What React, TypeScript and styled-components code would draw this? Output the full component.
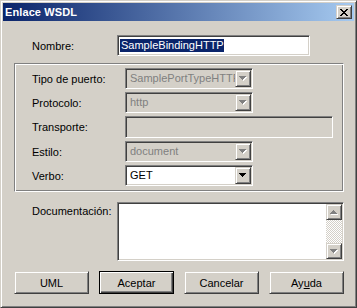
import React from 'react';
import styled, { createGlobalStyle } from 'styled-components';

const GlobalStyle = createGlobalStyle`
  html, body {
    margin: 0;
    padding: 0;
    background: #d4d0c8;
  }
  body {
    font-family: "Liberation Sans", Arial, sans-serif;
    font-size: 11px;
    color: #000;
  }
  * {
    box-sizing: border-box;
  }
`;

// Win2k bevels
const raised = `
  border: 1px solid;
  border-color: #d4d0c8 #404040 #404040 #d4d0c8;
  box-shadow: inset 1px 1px #fff, inset -1px -1px #808080;
`;

const sunken = `
  border: 1px solid;
  border-color: #808080 #fff #fff #808080;
  box-shadow: inset 1px 1px #404040, inset -1px -1px #d4d0c8;
`;

const Window = styled.div`
  width: 357px;
  height: 308px;
  background: #d4d0c8;
  border: 1px solid;
  border-color: #d4d0c8 #404040 #404040 #d4d0c8;
  box-shadow: inset 1px 1px #fff, inset -1px -1px #808080;
  padding: 2px;
  display: flex;
  flex-direction: column;
`;

const TitleBar = styled.div`
  height: 18px;
  display: flex;
  align-items: center;
  justify-content: space-between;
  padding: 0 2px 0 2px;
  background: linear-gradient(to right, #0a246a, #a6caf0);
`;

const Title = styled.span`
  color: #fff;
  font-weight: bold;
  font-size: 11px;
  letter-spacing: 0.1px;
`;

const CloseButton = styled.div`
  width: 16px;
  height: 14px;
  background: #d4d0c8;
  ${raised}
  display: flex;
  align-items: center;
  justify-content: center;
  padding-top: 0px;
`;

const Body = styled.div`
  flex: 1;
  display: flex;
  flex-direction: column;
  padding: 14px 10px 0 11px;
`;

const FieldRow = styled.div<{ $labelWidth: number; $top?: boolean }>`
  display: grid;
  grid-template-columns: ${(p) => p.$labelWidth}px 1fr;
  align-items: ${(p) => (p.$top ? 'start' : 'center')};
`;

const Label = styled.span<{ $indent: number; $top?: boolean }>`
  padding-left: ${(p) => p.$indent}px;
  padding-top: ${(p) => (p.$top ? 3 : 0)}px;
  white-space: nowrap;
`;

const TextBox = styled.div<{ $width: number; $height: number; $disabled?: boolean }>`
  width: ${(p) => p.$width}px;
  height: ${(p) => p.$height}px;
  background: ${(p) => (p.$disabled ? '#d4d0c8' : '#fff')};
  ${sunken}
  padding: 1px 2px;
  display: flex;
  align-items: center;
  overflow: hidden;
`;

const Selected = styled.span`
  background: #0a246a;
  color: #fff;
  line-height: 13px;
  padding: 0 0 0 1px;
  white-space: nowrap;
`;

const GroupBox = styled.div`
  margin-top: 7px;
  width: 330px;
  height: 129px;
  border: 1px solid;
  border-color: #808080 #fff #fff #808080;
  box-shadow: inset 1px 1px #fff, inset -1px -1px #808080;
  padding: 4px 8px 0 0;
  display: grid;
  grid-template-columns: 110px 1fr;
  grid-template-rows: 21px 21px 22px 21px 21px;
  row-gap: 3px;
  align-items: center;
`;

const Combo = styled.div<{ $disabled?: boolean }>`
  width: 128px;
  height: 21px;
  ${sunken}
  padding: 1px;
  display: flex;
  background: ${(p) => (p.$disabled ? '#d4d0c8' : '#fff')};
`;

const ComboText = styled.span<{ $disabled?: boolean }>`
  flex: 1;
  min-width: 0;
  overflow: hidden;
  white-space: nowrap;
  padding-left: 3px;
  line-height: 17px;
  color: ${(p) => (p.$disabled ? '#808080' : '#000')};
`;

const ArrowButton = styled.div`
  width: 16px;
  height: 17px;
  flex: none;
  background: #d4d0c8;
  ${raised}
  display: flex;
  align-items: center;
  justify-content: center;
`;

const DocRow = styled(FieldRow)`
  margin-top: 10px;
`;

const TextArea = styled.div`
  height: 59px;
  width: 227px;
  background: #fff;
  ${sunken}
  padding: 1px;
  display: flex;
  justify-content: flex-end;
`;

const ScrollBar = styled.div`
  width: 16px;
  display: flex;
  flex-direction: column;
`;

const ScrollTrack = styled.div`
  flex: 1;
  background: repeating-conic-gradient(#fff 0 25%, #d4d0c8 0 50%) 0 0 / 2px 2px;
`;

const ScrollButton = styled.div`
  width: 16px;
  height: 16px;
  background: #d4d0c8;
  ${raised}
  display: flex;
  align-items: center;
  justify-content: center;
`;

const ButtonRow = styled.div`
  margin-top: 10px;
  width: 330px;
  display: flex;
  justify-content: space-between;
`;

const Button = styled.div<{ $default?: boolean }>`
  width: 75px;
  height: 23px;
  background: #d4d0c8;
  display: flex;
  align-items: center;
  justify-content: center;
  ${(p) =>
    p.$default
      ? `
    border: 1px solid #000;
    box-shadow: inset 1px 1px #fff, inset -1px -1px #404040, inset -2px -2px #808080;
  `
      : raised}
`;

const Arrow = ({ dir, disabled }: { dir: 'up' | 'down'; disabled?: boolean }) => {
  const d = dir === 'down' ? 'M0 0h7v1H0z M1 1h5v1H1z M2 2h3v1H2z M3 3h1v1H3z' : 'M3 0h1v1H3z M2 1h3v1H2z M1 2h5v1H1z M0 3h7v1H0z';
  return (
    <svg width="8" height="5" viewBox="0 0 8 5" shapeRendering="crispEdges">
      {disabled && <path d={d} fill="#fff" transform="translate(1 1)" />}
      <path d={d} fill={disabled ? '#808080' : '#000'} />
    </svg>
  );
};

const CloseGlyph = () => (
  <svg width="8" height="7" viewBox="0 0 8 7" shapeRendering="crispEdges">
    <path
      d="M0 0h2v1H0z M6 0h2v1H6z M1 1h2v1H1z M5 1h2v1H5z M2 2h4v1H2z M3 3h2v1H3z M2 4h4v1H2z M1 5h2v1H1z M5 5h2v1H5z M0 6h2v1H0z M6 6h2v1H6z"
      fill="#000"
    />
  </svg>
);

const ComboBox = ({ value, disabled }: { value: string; disabled?: boolean }) => (
  <Combo $disabled={disabled}>
    <ComboText $disabled={disabled}>{value}</ComboText>
    <ArrowButton>
      <Arrow dir="down" disabled={disabled} />
    </ArrowButton>
  </Combo>
);

const App: React.FC = () => {
  return (
    <>
      <GlobalStyle />
      <Window>
        <TitleBar>
          <Title>Enlace WSDL</Title>
          <CloseButton>
            <CloseGlyph />
          </CloseButton>
        </TitleBar>

        <Body>
          {/* Nombre */}
          <FieldRow $labelWidth={103}>
            <Label $indent={18}>Nombre:</Label>
            <TextBox $width={193} $height={21}>
              <Selected>SampleBindingHTTP</Selected>
            </TextBox>
          </FieldRow>

          {/* Port / binding details */}
          <GroupBox>
            <Label $indent={17}>Tipo de puerto:</Label>
            <ComboBox value="SamplePortTypeHTTP" disabled />

            <Label $indent={17}>Protocolo:</Label>
            <ComboBox value="http" disabled />

            <Label $indent={17}>Transporte:</Label>
            <TextBox $width={208} $height={22} $disabled />

            <Label $indent={17}>Estilo:</Label>
            <ComboBox value="document" disabled />

            <Label $indent={17}>Verbo:</Label>
            <ComboBox value="GET" />
          </GroupBox>

          {/* Documentación */}
          <DocRow $labelWidth={103} $top>
            <Label $indent={18} $top>
              Documentación:
            </Label>
            <TextArea>
              <ScrollBar>
                <ScrollButton>
                  <Arrow dir="up" disabled />
                </ScrollButton>
                <ScrollTrack />
                <ScrollButton>
                  <Arrow dir="down" disabled />
                </ScrollButton>
              </ScrollBar>
            </TextArea>
          </DocRow>

          <ButtonRow>
            <Button>UML</Button>
            <Button $default>Aceptar</Button>
            <Button>Cancelar</Button>
            <Button>
              Ay<u>u</u>da
            </Button>
          </ButtonRow>
        </Body>
      </Window>
    </>
  );
};

export default App;
